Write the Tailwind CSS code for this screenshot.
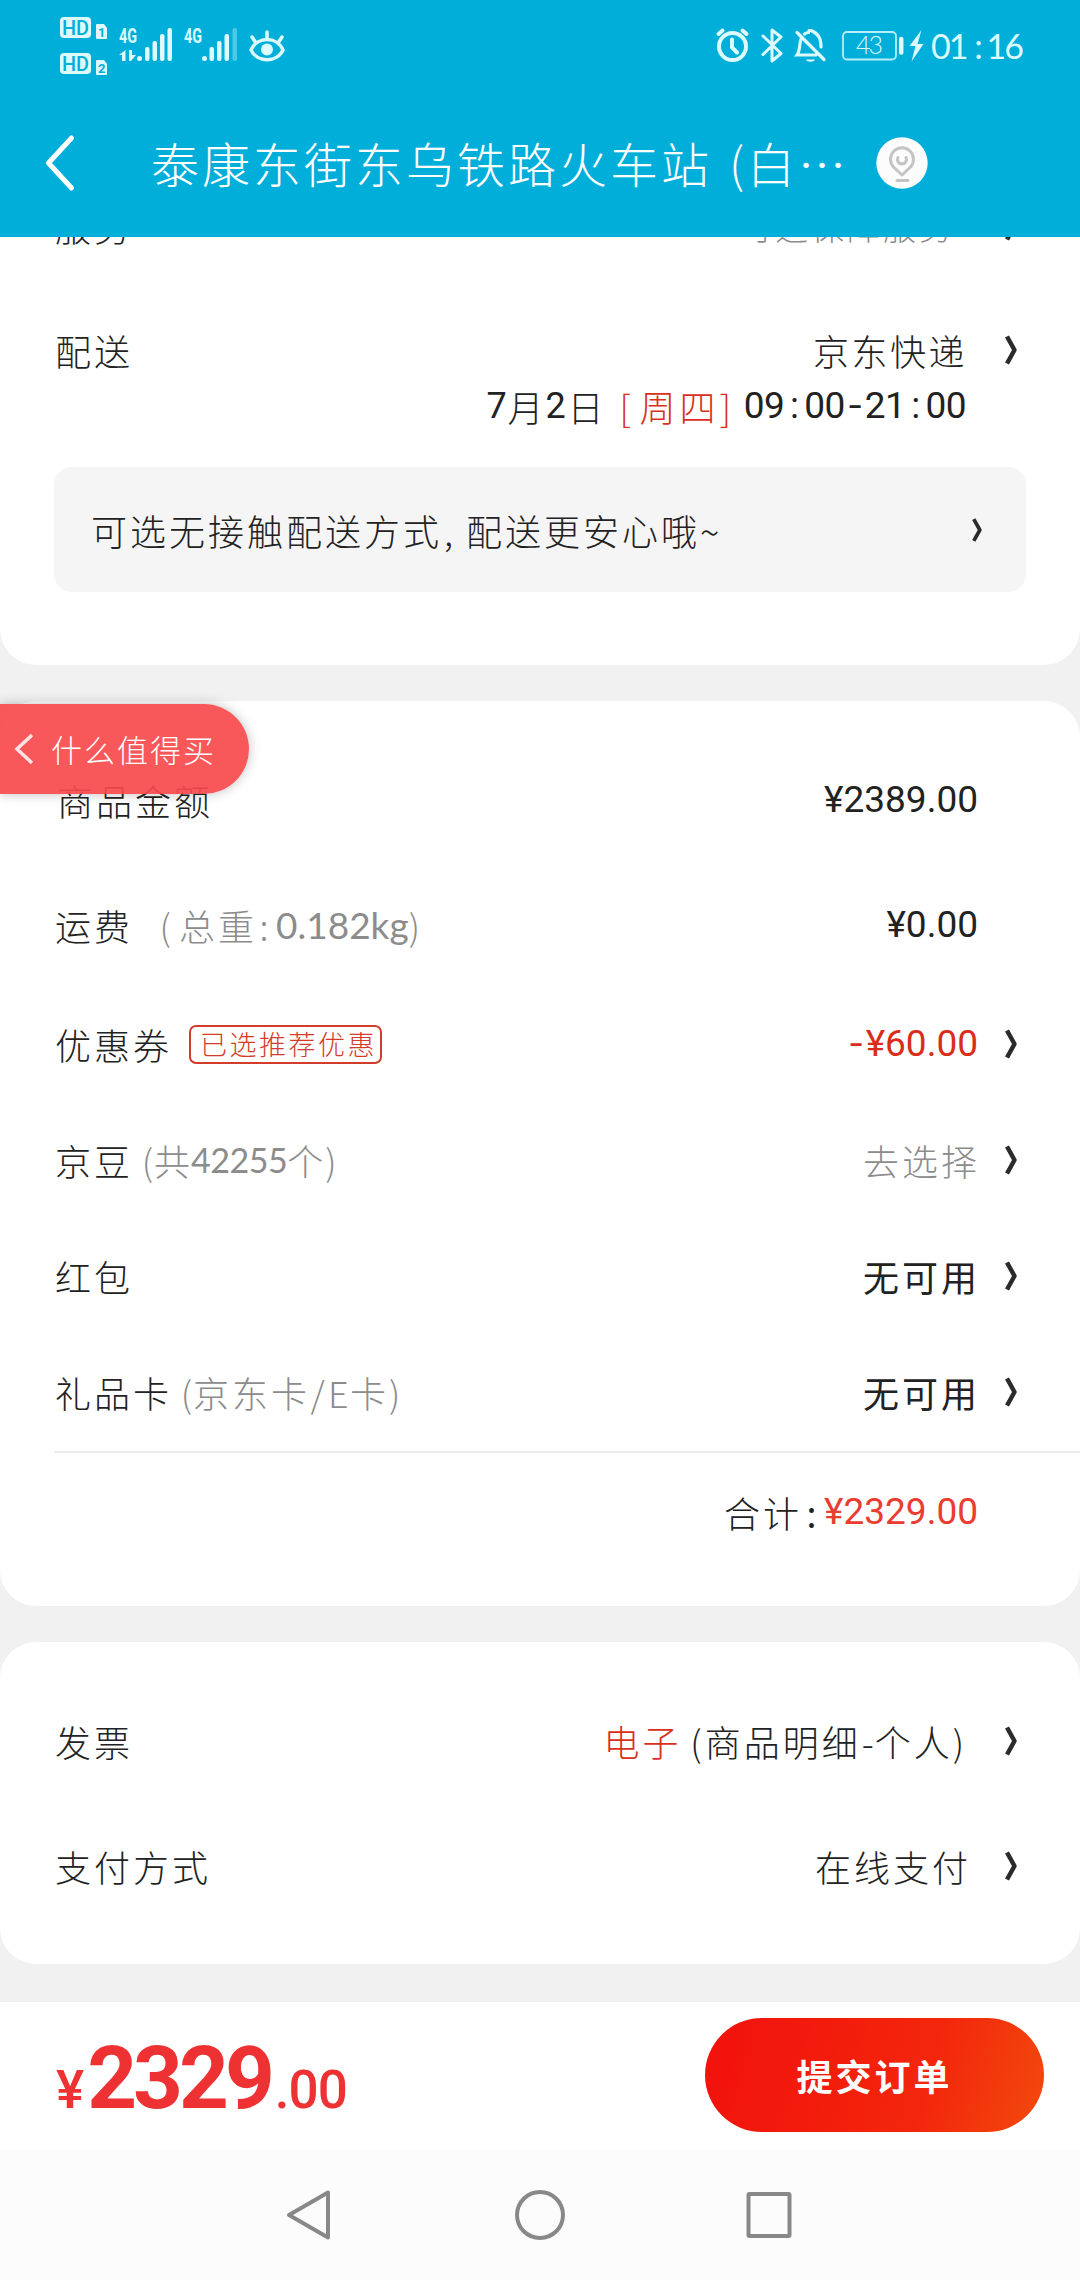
<!DOCTYPE html>
<html lang="zh-CN">
<head>
<meta charset="utf-8">
<title>填写订单</title>
<script src="https://cdn.jsdelivr.net/npm/@tailwindcss/browser@4"></script>
</head>
<body class="w-[1080px] h-[2280px] overflow-hidden bg-[#f1f1f1] flex flex-col font-['Noto_Sans_CJK_SC',sans-serif] font-light text-[36px] leading-10 tracking-[3px] text-[#222] whitespace-nowrap">
<svg class="hidden">
  <symbol id="arrow" viewBox="0 0 14 32"><path d="M3 2.500L10.500 16L3 29.500" fill="none" stroke="#2b2b2b" stroke-width="4.500" stroke-linejoin="round"/></symbol>
</svg>

<header class="h-[237px] shrink-0 bg-[#00aeda] relative z-10 text-white">
  <!-- status bar -->
  <div class="h-[90px] flex justify-between pl-[58px] pr-[58px]">
    <svg class="w-[232px] h-[90px]" viewBox="58 0 232 90" fill="#dcfaff">
      <rect x="60" y="17" width="31" height="21" rx="4"/>
      <rect x="60" y="53" width="31" height="21" rx="4"/>
      <g font-family="Roboto, sans-serif" font-weight="500" letter-spacing="0" fill="#00aeda" font-size="20">
        <text x="62" y="35" textLength="27" lengthAdjust="spacingAndGlyphs">HD</text>
        <text x="62" y="71" textLength="27" lengthAdjust="spacingAndGlyphs">HD</text>
      </g>
      <path d="M97 24h7l3 4v10a1 1 0 0 1-1 1h-9a1 1 0 0 1-1-1V25a1 1 0 0 1 1-1zM97 60h7l3 4v10a1 1 0 0 1-1 1h-9a1 1 0 0 1-1-1V61a1 1 0 0 1 1-1z"/>
      <g font-family="Roboto, sans-serif" font-weight="700" letter-spacing="0" fill="#00aeda" font-size="13">
        <text x="98" y="37">1</text><text x="98" y="73">2</text>
      </g>
      <g font-family="Roboto, sans-serif" font-weight="700" letter-spacing="0" font-size="20">
        <text x="119" y="42.500" textLength="18" lengthAdjust="spacingAndGlyphs">4G</text>
        <text x="184" y="42.500" textLength="18" lengthAdjust="spacingAndGlyphs">4G</text>
      </g>
      <path d="M125.500 50v11h-3.500v-6h-3zM129 50h3v5h4l-5 6h-2z"/>
      <rect x="137" y="56" width="5" height="5" rx="2.500"/><rect x="145" y="47" width="4.500" height="14" rx="2"/><rect x="152.500" y="41" width="4.500" height="20" rx="2"/><rect x="160" y="34" width="4.500" height="27" rx="2"/><rect x="167.500" y="28" width="4.500" height="33" rx="2"/>
      <rect x="202" y="56" width="5" height="5" rx="2.500"/><rect x="209.500" y="47" width="4.500" height="14" rx="2"/><rect x="217" y="41" width="4.500" height="20" rx="2"/><rect x="224.500" y="34" width="4.500" height="27" rx="2"/><rect x="232.500" y="28" width="4.500" height="33" rx="2" opacity=".35"/>
      <g fill="none" stroke="#dcfaff" stroke-width="3.500" stroke-linecap="round">
        <path d="M251 50C257 36 277 36 283 50C277 63 257 63 251 50z"/><path d="M267 32v6M252 37l4 6M282 37l-4 6"/>
      </g>
      <circle cx="267" cy="49.500" r="6"/>
    </svg>
    <div class="flex">
      <svg class="w-[216px] h-[90px]" viewBox="712 0 216 90" fill="none" stroke="#dcfaff" stroke-width="3.500" stroke-linecap="round">
        <circle cx="732.500" cy="46.500" r="13.500" stroke-width="4"/><path d="M732 39.500v8l5 5M718.500 34l4-3.500M746.500 34l-4-3.500" stroke-width="4"/>
        <path d="M763 36l18 17.500-9 7.500V30l9 7-18 17.500" stroke-width="3" stroke-linejoin="round"/>
        <path d="M797 32.500l27 27M801 39c-2 5-.5 11-4 16h19M804.500 34c2-1.500 3-1.500 4-1.500M809 30.500h2c7 3 10 7 10 16.500" stroke-width="3.200"/>
        <path d="M806 59.500h9c-1 3-8 3-9 0z" fill="#dcfaff" stroke="none"/>
        <rect x="843" y="32" width="53" height="27.500" rx="4" stroke-width="1.800" stroke="#b6eef8"/>
        <path d="M901.200 39v13.500" stroke-width="4.500"/>
        <path d="M921.500 30l-12 16h6l-4 15.500 12-17.500h-6z" fill="#dcfaff" stroke="none"/>
        <text x="856" y="53.500" font-family="Lato, sans-serif" font-size="25" letter-spacing="0" fill="#dcfaff" stroke="none" textLength="27">43</text>
      </svg>
      <div class="w-[94px] pl-[3px] pt-[26px] font-['Lato',sans-serif] font-normal text-[34px] tracking-[-2px] text-[#dcfaff] flex"><span>01</span><span class="w-[18px] ml-[2px] text-center">:</span><span>16</span></div>
    </div>
  </div>
  <!-- title bar -->
  <div class="h-[147px] flex items-start pl-[44px]">
    <svg class="w-8 h-[58px] mt-[44px]" viewBox="0 0 32 58"><path d="M27.500 4L4.500 29L27.500 54" fill="none" stroke="#fff" stroke-width="5" stroke-linecap="round" stroke-linejoin="round"/></svg>
    <h1 class="ml-[75px] mt-[42px] w-[712px] text-[48px] leading-[60px] tracking-[3px]">泰康东街东乌铁路火车站<span class="inline-block w-[35px] text-right">(</span>白…</h1>
    <svg class="w-[52px] h-[52px] mt-[47px] ml-[13px]" viewBox="0 0 52 52" fill="none" stroke="#c4c4c4" stroke-width="3"><circle cx="26" cy="26" r="25.700" fill="#fcfcfc" stroke="none"/><path d="M26 38l-8.500-8a11.500 11.500 0 1 1 17 0zM21 43.500h11M22 20.500a4.500 4.500 0 1 0 8 0" stroke-linecap="round" stroke-linejoin="round"/></svg>
  </div>
</header>

<!-- delivery -->
<section class="h-[428px] shrink-0 bg-white rounded-b-[36px]">
  <div class="-mt-[31px] h-10 flex items-center pl-[55px] pr-[62px]">
    <span>服务</span><span class="ml-auto mr-[49px] text-[#8c8c8c] text-[33px]">可选保障服务</span><svg class="w-[14px] h-8"><use href="#arrow"/></svg>
  </div>
  <div class="mt-[84px] h-10 flex items-center pl-[55px] pr-[62px]">
    <span>配送</span><span class="ml-auto mr-[37px] tracking-[2.500px]">京东快递</span><svg class="w-[14px] h-8"><use href="#arrow"/></svg>
  </div>
  <div class="mt-[16px] h-10 flex items-center justify-end pr-[114px]">
    <span class="flex tracking-normal"><b class="w-[21px] font-[Roboto,sans-serif]">7</b><span class="w-[38px]">月</span><b class="w-[22px] font-[Roboto,sans-serif]">2</b><span class="w-[39px]">日</span></span>
    <span class="ml-[13px] flex text-[#d9301e]"><span class="tracking-normal w-[20px]">[</span><span class="tracking-[4px]">周四</span><span class="tracking-normal w-[12px]">]</span></span>
    <b class="ml-[12px] flex font-[Roboto,sans-serif] text-[37px] tracking-[-0.500px]"><span>09</span><span class="w-[20px] text-center">:</span><span>00</span><span class="w-[20px] flex items-center justify-center"><span class="inline-block origin-center scale-x-125">-</span></span><span>21</span><span class="w-[20px] text-center">:</span><span>00</span></b>
  </div>
  <div class="mt-[41px] mx-[54px] h-[125px] rounded-[18px] bg-[#f5f5f5] flex items-center pl-[37px] pr-[43px]">
    <span>可选无接触配送方式<span class="inline-block w-[24px] pl-[2px]">,</span>配送更安心哦~</span>
    <svg class="ml-auto w-[12px] h-[26px]"><use href="#arrow"/></svg>
  </div>
</section>

<!-- amounts -->
<section class="relative mt-9 h-[905px] shrink-0 bg-white rounded-[36px] pt-[79px]">
  <a class="absolute left-0 top-[3px] z-10 w-[249px] h-[90px] rounded-r-full bg-[#f84a4d]/92 shadow-[0_0_12px_rgba(0,0,0,.25)] flex items-center pl-[14px] text-white text-[31px] tracking-[2px]">
    <svg class="w-5 h-8 mr-[17px]" viewBox="0 0 20 32"><path d="M18 2L3 16L18 30" fill="none" stroke="#ffe3e3" stroke-width="3.500"/></svg>什么值得买
  </a>
  <div class="h-10 flex items-center pl-[57px] pr-[102px]"><span>商品金额</span><b class="ml-auto font-[Roboto,sans-serif] text-[37px] tracking-[0px]">¥2389.00</b></div>
  <div class="mt-[85px] h-10 flex items-center pl-[55px] pr-[102px]">
    <span>运费</span><span class="ml-[10px] text-[#8c8c8c] flex"><span class="w-[36px] text-right">(&#8202;</span><span class="tracking-[3px]">总重</span><span class="w-[17px] text-center">:</span><span class="tracking-[0px] font-['Lato',sans-serif] font-normal text-[37px] pl-[2px]">0.182kg</span><span>)</span></span>
    <b class="ml-auto font-[Roboto,sans-serif] text-[37px] tracking-[0px]">¥0.00</b>
  </div>
  <div class="mt-[79px] h-10 flex items-center pl-[55px] pr-[62px]">
    <span>优惠券</span><span class="ml-[17px] w-[193px] h-[39px] border-2 border-[#d33c2a] rounded-[7px] text-[#d33c2a] text-[27px] leading-[33px] tracking-[2.500px] pl-[9px]">已选推荐优惠</span>
    <b class="ml-auto mr-[26px] flex font-[Roboto,sans-serif] text-[37px] tracking-[0px] text-[#da2d19]"><span class="inline-block scale-x-125 mr-[4px]">-</span>¥60.00</b><svg class="w-[14px] h-8"><use href="#arrow"/></svg>
  </div>
  <div class="mt-[76px] h-10 flex items-center pl-[55px] pr-[62px]">
    <span>京豆</span><span class="text-[#8c8c8c] flex"><span class="w-[20px] text-right tracking-normal mr-[1px]">(</span><span class="tracking-[1px]">共</span><span class="font-['Lato',sans-serif] font-normal text-[34px] tracking-[-0.500px]">42255</span><span class="tracking-[2px]">个</span><span>)</span></span>
    <span class="ml-auto mr-[24px] text-[#8c8c8c]">去选择</span><svg class="w-[14px] h-8"><use href="#arrow"/></svg>
  </div>
  <div class="mt-[76px] h-10 flex items-center pl-[55px] pr-[62px]">
    <span>红包</span><span class="ml-auto mr-[24px] font-normal">无可用</span><svg class="w-[14px] h-8"><use href="#arrow"/></svg>
  </div>
  <div class="mt-[76px] h-10 flex items-center pl-[55px] pr-[62px]">
    <span>礼品卡</span><span class="text-[#8c8c8c] flex"><span class="w-[20px] text-right tracking-normal mr-[1px]">(</span><span>京东卡</span><span class="w-[18px] text-center">/</span><span class="w-[22px]">E</span><span>卡</span><span>)</span></span>
    <span class="ml-auto mr-[24px] font-normal">无可用</span><svg class="w-[14px] h-8"><use href="#arrow"/></svg>
  </div>
  <div class="mt-[39px] ml-[54px] h-[2px] bg-[#ececec]"></div>
  <div class="mt-[39px] h-10 flex items-center justify-end pr-[102px]"><span>合计</span><span class="w-[22px] text-center font-normal">:</span><b class="font-[Roboto,sans-serif] text-[37px] tracking-[0px] text-[#ea3c30]">¥2329.00</b></div>
</section>

<!-- invoice and payment -->
<section class="mt-9 h-[322px] shrink-0 bg-white rounded-[36px] pt-[79px]">
  <div class="h-10 flex items-center pl-[55px] pr-[62px]">
    <span>发票</span><span class="ml-auto mr-[40px] flex"><span class="text-[#d9301e]">电子</span><span class="w-[20px] text-right tracking-normal mr-[3px]">(</span><span>商品明细</span><span class="w-[14px] text-center tracking-normal">-</span><span>个人</span><span class="tracking-normal">)</span></span><svg class="w-[14px] h-8"><use href="#arrow"/></svg>
  </div>
  <div class="mt-[85px] h-10 flex items-center pl-[55px] pr-[62px]">
    <span>支付方式</span><span class="ml-auto mr-[33px]">在线支付</span><svg class="w-[14px] h-8"><use href="#arrow"/></svg>
  </div>
</section>

<!-- submit bar -->
<footer class="mt-[38px] h-[148px] shrink-0 bg-white flex items-start pl-[56px] pr-[36px]">
  <div class="mt-[26px] flex items-baseline font-[Roboto,sans-serif] font-medium text-[#ee3233] leading-[100px]"><span class="text-[53px] tracking-normal">¥</span><b class="text-[87px] tracking-[-4px] ml-[3px]">2329</b><span class="text-[53px] tracking-[-1px] ml-[4px]">.00</span></div>
  <button class="ml-auto mt-4 w-[339px] h-[114px] rounded-full bg-linear-[105deg,#f2140c_10%,#f3260c_65%,#f24a0c] text-white font-bold text-[36px] tracking-[3px]">提交订单</button>
</footer>

<!-- system navigation -->
<nav class="h-[130px] shrink-0 bg-[#fcfcfc] flex justify-center">
  <svg class="w-[520px] h-[130px]" viewBox="280 0 520 130" fill="none" stroke="#888" stroke-width="4" stroke-linejoin="round"><path d="M328 42.500v45L289 65z"/><circle cx="540" cy="65" r="23"/><rect x="748.500" y="44" width="41" height="42" rx="1"/></svg>
</nav>
</body>
</html>
